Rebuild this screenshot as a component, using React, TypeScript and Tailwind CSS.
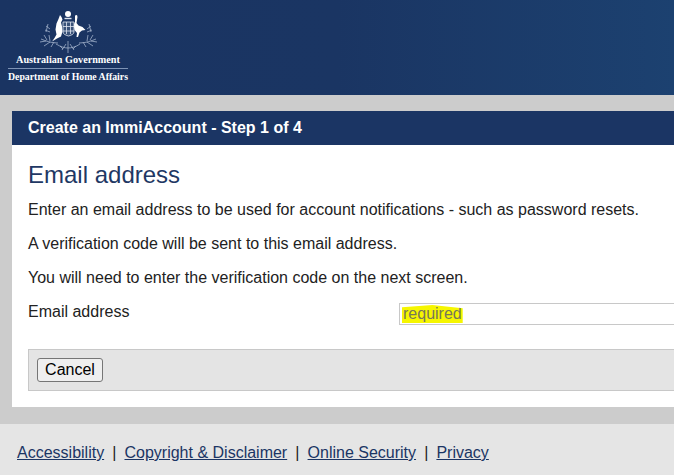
import React from 'react';

const Crest = () => (
  <svg width="64" height="48" viewBox="0 0 64 48" className="block" fill="none">
    {/* wreath */}
    <g stroke="#b9c6dc" strokeWidth="0.8" opacity="0.85">
      <path d="M5 33c5 2 10 4 17 4M8 29l3 5M13 29l1 6M4 36l6-1M8 40l6-4M15 41l3-5" />
      <path d="M60 33c-5 2-10 4-17 4M57 29l-3 5M52 29l-1 6M61 36l-6-1M57 40l-6-4M50 41l-3-5" />
      <path d="M20 38c5 3 9 4 12 4s8-1 12-4M26 44l4-6M38 44l-4-6M32 47v-12M24 40l3 3M40 40l-3 3" />
      <path d="M12 18l-2 8M10 20l4 3M9 24l5 2M53 18l2 8M55 20l-4 3M56 24l-5 2" />
    </g>
    {/* kangaroo */}
    <path d="M24 9l1.500 2 1 2.500-1.500 3 1 4 .5 5-1.500 5-4 2-5 3 2.500-3.500 2-3.500-1-5 1-6 2-4.500z" fill="#fff" />
    {/* emu */}
    <path d="M39 9.500l2-.5.5 2-1 6 2 2.500 4 1.500 3 3-3.500 .5-2.500 2-1.500 4.500-1.500 0 .5-4-2.500-3-1-5 1.500-3z" fill="#fff" />
    {/* shield */}
    <path d="M27 16h11v10c0 2-2 3-5.500 4-3.500-1-5.500-2-5.500-4z" fill="#3a5279" stroke="#dfe6f0" strokeWidth="0.8" />
    <path d="M30.500 16v12M34.500 16v12M27 20.500h11M27 25h11" stroke="#dfe6f0" strokeWidth="0.8" />
    {/* star and crown */}
    <circle cx="32" cy="8" r="3" fill="#fff" />
    <path d="M28.500 12.500h7" stroke="#dfe6f0" strokeWidth="1.400" />
  </svg>
);

const Sep = () => <span className="mx-[8.100px] text-[#222]">|</span>;

const FooterLink = ({ children }: { children: React.ReactNode }) => (
  <a href="#" className="text-[#1b3564] underline">{children}</a>
);

export default function App() {
  return (
    <div className="w-[674px] h-[475px] overflow-hidden flex flex-col bg-[#cccccc] font-['Liberation_Sans',Arial,sans-serif]">
      {/* Header */}
      <header className="h-[95px] shrink-0 bg-gradient-to-r from-[#1a3462] via-[#1a3563] to-[#1c4170] pl-2 flex">
        <div className="w-[120px] flex flex-col items-center pt-[6px] font-['Liberation_Serif',serif] font-bold">
          <Crest />
          <div className="text-white text-[10.200px] leading-[12px] whitespace-nowrap">Australian Government</div>
          <div className="w-full h-[1px] bg-[#7d93b5] mt-[2px]"></div>
          <div className="text-white text-[9.800px] leading-[12px] mt-[2px] whitespace-nowrap">Department of Home Affairs</div>
        </div>
      </header>

      {/* Main */}
      <main className="flex-1 pt-4 pl-3 pb-[17px] flex flex-col">
        <div className="flex-1 bg-white flex flex-col">
          <div className="h-[34px] bg-[#1b3564] text-white font-bold text-[16px] pl-4 flex items-center">
            Create an ImmiAccount - Step 1 of 4
          </div>
          <div className="pl-4 pt-[16px]">
            <h1 className="text-[24px] leading-[28px] text-[#1f3864]">Email address</h1>
            <p className="text-[16px] leading-[18px] text-[#222] mt-[12px] whitespace-nowrap">Enter an email address to be used for account notifications - such as password resets.</p>
            <p className="text-[16px] leading-[18px] text-[#222] mt-[16px] whitespace-nowrap">A verification code will be sent to this email address.</p>
            <p className="text-[16px] leading-[18px] text-[#222] mt-[16px] whitespace-nowrap">You will need to enter the verification code on the next screen.</p>
            <div className="flex items-start mt-[16px]">
              <label className="w-[371px] text-[16px] leading-[18px] text-[#222] shrink-0">Email address</label>
              <div className="flex-1 h-[22px] border border-[#c8c8c8] border-r-0 flex items-center pl-[2px]">
                <span className="text-[16px] leading-[18px] text-[#77775a] px-[1px] bg-[#f6f600] [clip-path:polygon(0_12%,50%_0,100%_18%,100%_100%,0_100%)]">required</span>
              </div>
            </div>
          </div>
          <div className="mt-[24px] ml-4 h-[42px] bg-[#e4e4e4] border-y border-l border-[#c8c8c8] flex items-center pl-2">
            <button className="w-[66px] h-[24px] bg-[#efefef] border border-[#767676] rounded-[3px] text-[16px] text-black flex items-center justify-center">Cancel</button>
          </div>
        </div>
      </main>

      {/* Footer */}
      <footer className="h-[51px] shrink-0 bg-[#e5e5e5] pl-[17px] pt-[20px] text-[16px] leading-[18px] whitespace-nowrap">
        <FooterLink>Accessibility</FooterLink>
        <Sep />
        <FooterLink>Copyright &amp; Disclaimer</FooterLink>
        <Sep />
        <FooterLink>Online Security</FooterLink>
        <Sep />
        <FooterLink>Privacy</FooterLink>
      </footer>
    </div>
  );
}
